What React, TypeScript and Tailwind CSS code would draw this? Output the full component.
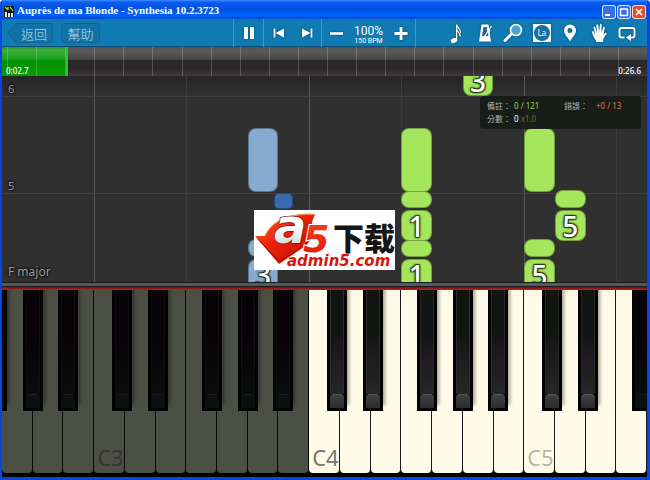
import React from "react";

const WHITE_KEYS = 21;
const FIRST_LIT_KEY = 10;
const KEY_LABELS: Record<number, string> = { 3: "C3", 10: "C4", 17: "C5" };
const KEY_NAMES = ["G", "A", "B", "C", "D", "E", "F"];

// Centres of the black keys, counted in white keys from the C of each octave.
const BLACK_OFFSETS: [string, number][] = [
  ["C#", 0.92],
  ["D#", 2.09],
  ["F#", 3.83],
  ["G#", 5.01],
  ["A#", 6.16],
];

const blackKeys = [-4, 3, 10, 17]
  .flatMap((base, octave) =>
    BLACK_OFFSETS.map(([name, offset]) => ({ name: `${name}${octave + 2}`, centre: base + offset })),
  )
  .filter((k) => k.centre > -0.5 && k.centre < 21);

type Note = { key: number; bottom: number; height: number; tone: "green" | "blue" | "navy"; finger?: string };

const notes: Note[] = [
  { key: 8, bottom: 90, height: 64, tone: "blue" },
  { key: 8.86, bottom: 73, height: 16, tone: "navy" },
  { key: 8, bottom: 25, height: 18, tone: "blue" },
  { key: 8, bottom: -8, height: 31, tone: "blue", finger: "3" },
  { key: 13, bottom: 90, height: 64, tone: "green" },
  { key: 13, bottom: 74, height: 17, tone: "green" },
  { key: 13, bottom: 41, height: 31, tone: "green", finger: "1" },
  { key: 13, bottom: 25, height: 17, tone: "green" },
  { key: 13, bottom: -8, height: 31, tone: "green", finger: "1" },
  { key: 15, bottom: 186, height: 31, tone: "green", finger: "3" },
  { key: 17, bottom: 90, height: 64, tone: "green" },
  { key: 17, bottom: 25, height: 18, tone: "green" },
  { key: 17, bottom: -8, height: 31, tone: "green", finger: "5" },
  { key: 18, bottom: 74, height: 18, tone: "green" },
  { key: 18, bottom: 41, height: 31, tone: "green", finger: "5" },
];

const toneClass = {
  green: "bg-[#a5e65c] rounded-lg",
  blue: "bg-[#86aad0] rounded-lg",
  navy: "bg-[#3a6ab0] rounded-[5px]",
};

const pct = (keys: number) => `${(keys / WHITE_KEYS) * 100}%`;

function TitleBar() {
  const box = "flex size-[14px] items-center justify-center rounded-[3px] border border-white/80";
  return (
    <header className="flex h-[19px] items-center bg-[linear-gradient(#3c8cff_0%,#0a5cf0_12%,#0050e0_45%,#0062ff_80%,#0048cc_100%)] pt-1 pr-px pl-[2px]">
      <svg viewBox="0 0 10 11" className="h-[11px] w-[10px]" aria-hidden="true">
        <rect width="10" height="11" fill="#10160e" />
        <path d="M1 6h2v5H1zM4 7h2v4H4zM7 7h2v4H7z" fill="#e8e8e0" />
        <path d="M1 1l3 3M4 1v3" stroke="#8fd84a" strokeWidth="1.4" />
        <path d="M6 1l3 4" stroke="#d4d84a" strokeWidth="1.2" />
      </svg>
      <h1 className="ml-[3px] flex-1 pb-[3px] font-['Liberation_Serif',serif] text-[11px] leading-3 font-bold whitespace-pre text-white">
        Auprès de ma Blonde - Synthesia 10.2.3723
      </h1>
      <div className="flex gap-px">
        <button aria-label="Minimize" className={`${box} bg-[#3a6fe8]`}>
          <svg viewBox="0 0 12 12" className="size-3"><path d="M2 8h5v2H2z" fill="#fff" /></svg>
        </button>
        <button aria-label="Maximize" className={`${box} bg-[#3a6fe8]`}>
          <svg viewBox="0 0 12 12" className="size-3"><path d="M2 3h8M2.5 3v6.5h7V3" fill="none" stroke="#fff" strokeWidth="1.4" /></svg>
        </button>
        <button aria-label="Close" className={`${box} bg-[#e0502c]`}>
          <svg viewBox="0 0 12 12" className="size-3"><path d="M3 3l6 6M9 3l-6 6" stroke="#fff" strokeWidth="1.7" /></svg>
        </button>
      </div>
    </header>
  );
}

function ToolIcon({ label, children }: { label: string; children: React.ReactNode }) {
  return (
    <button aria-label={label} className="flex h-7 w-7 items-center justify-center">
      <svg viewBox="0 0 28 28" className="size-7 drop-shadow-[0_0_1px_#06486e]" fill="none">{children}</svg>
    </button>
  );
}

function Toolbar() {
  const cjk = "font-['Noto_Sans_CJK_TC',sans-serif] text-[13px] leading-[19px] font-light text-[#b4dcee]";
  const line = "border-l border-[#3f9bcb]";
  return (
    <nav className="grid h-7 grid-cols-[1fr_auto_1fr] items-center border-b border-[#0a5078] bg-[#107ab2]">
      <div className="flex gap-2 pl-[5px]">
        <button className={`relative flex h-5 w-[46px] items-center justify-end pr-[6px] ${cjk}`}>
          <svg viewBox="0 0 46 20" className="absolute inset-0 h-5 w-[46px]" aria-hidden="true">
            <path d="M1 10L8 2Q9 .5 11 .5H42Q45.500 .5 45.500 4V16Q45.500 19.500 42 19.500H11Q9 19.500 8 18Z" fill="#1272a5" stroke="#0d6594" />
          </svg>
          <span className="relative">返回</span>
        </button>
        <button className={`flex h-5 w-[39px] items-center justify-center rounded border border-[#0d6594] bg-[#1272a5] ${cjk}`}>幫助</button>
      </div>
      <div className="flex h-full items-stretch border-r border-[#3f9bcb] text-white">
        <div className={`w-[30px] ${line}`}>
          <ToolIcon label="Pause"><path d="M10 8h4v12h-4zM16 8h4v12h-4z" fill="#fff" /></ToolIcon>
        </div>
        <div className={`flex w-[58px] ${line}`}>
          <ToolIcon label="Previous"><path d="M10.500 9.500v9" stroke="#fff" strokeWidth="1.8" /><path d="M20 9.500v9L11.500 14z" fill="#fff" /></ToolIcon>
          <ToolIcon label="Next"><path d="M19.500 9.500v9" stroke="#fff" strokeWidth="1.8" /><path d="M10 9.500v9l8.500-4.500z" fill="#fff" /></ToolIcon>
        </div>
        <div className={`flex w-[94px] items-center justify-between ${line}`}>
          <ToolIcon label="Slower"><path d="M8 14.500h13" stroke="#fff" strokeWidth="2.600" /></ToolIcon>
          <div className="pt-[3px] text-center font-['Roboto',sans-serif] whitespace-nowrap">
            <div className="text-[12px] leading-3">100%</div>
            <div className="text-[7px] leading-2">150 BPM</div>
          </div>
          <ToolIcon label="Faster"><path d="M7.500 14.500h13M14 8v13" stroke="#fff" strokeWidth="2.800" /></ToolIcon>
        </div>
      </div>
      <div className="mr-[6px] flex w-[199px] justify-between justify-self-end">
        <ToolIcon label="Notation">
          <ellipse cx="12" cy="21.500" rx="3.300" ry="2.400" fill="#fff" transform="rotate(-20 12 21.500)" />
          <path d="M14.600 21.500V5.500c.3 3 4.200 4 4 8.500M14.600 10.500c.8 2.500 4 3 3.600 7" stroke="#fff" strokeWidth="1.200" />
        </ToolIcon>
        <ToolIcon label="Metronome">
          <path d="M10.500 5.500h7L20 22.500H8z" fill="#fff" />
          <path d="M12.500 8h3.500l1.500 9h-6.500z" fill="#1b6d99" />
          <path d="M13.500 17.500L20.500 7" stroke="#fff" strokeWidth="1.300" />
          <path d="M16 10l3 2.200" stroke="#fff" strokeWidth="2" />
        </ToolIcon>
        <ToolIcon label="Zoom">
          <path d="M12.500 15L6 21.500" stroke="#fff" strokeWidth="3" strokeLinecap="round" />
          <circle cx="17" cy="11" r="5.500" fill="#4ba3d3" stroke="#fff" strokeWidth="1.700" />
        </ToolIcon>
        <ToolIcon label="Note labels">
          <rect x="5" y="5" width="18" height="18" rx="1" fill="#fff" />
          <circle cx="14" cy="14" r="8" fill="#17709f" />
          <text x="14" y="17" textAnchor="middle" fontSize="8" fontFamily="Noto Sans, sans-serif" fill="#fff">La</text>
        </ToolIcon>
        <ToolIcon label="Bookmark">
          <path fillRule="evenodd" d="M14 22.500C12.500 19 8 15.500 8 11.500a6 6 0 0 1 12 0c0 4-4.500 7.500-6 11zM14 9a2.500 2.500 0 1 0 0 5 2.500 2.500 0 0 0 0-5z" fill="#fff" />
        </ToolIcon>
        <ToolIcon label="Hands">
          <path d="M11.500 23c-.5-2-2.700-4-3.500-6.500l-1.200-3.600c-.2-1 1-1.300 1.600-.3l1.700 2.600L8.500 8.500c-.2-1.200 1.300-1.500 1.700-.3l1.800 5.300-.7-7.200c0-1.300 1.700-1.400 1.900 0l.9 6.700.7-7.200c.1-1.300 1.800-1.200 1.800 0l-.1 7.500 1.700-5c.4-1.200 1.900-.8 1.600.5l-1.300 6.700 1.400-1.500c.8-.8 2.200 0 1.600 1l-2.900 4.300-.8 3.700z" fill="#fff" />
        </ToolIcon>
        <ToolIcon label="Loop">
          <path d="M11.500 18.500H8.500a2 2 0 0 1-2-2V11a2 2 0 0 1 2-2h11a2 2 0 0 1 2 2v5.500a2 2 0 0 1-2 2H17" stroke="#fff" strokeWidth="1.900" />
          <path d="M18 15v7l-5-3.500z" fill="#fff" />
        </ToolIcon>
      </div>
    </nav>
  );
}

function Timeline() {
  return (
    <section className="relative h-[29px] bg-[linear-gradient(#505050_0%,#5a5a5a_10%,#454545_44%,#292629_46%,#2c282c_75%,#3c3a3c_100%)] font-['Noto_Sans',sans-serif] text-[8px] leading-[11px] font-medium text-white">
      <div className="absolute inset-y-0 left-0 w-[10.2%] border-r-2 border-[#2cc42c] bg-[linear-gradient(#2a962a_0%,#3cae3c_12%,#18a018_44%,#009000_48%,#0b9c0b_100%)]" />
      <div className="absolute inset-y-0 right-0 left-[5px] flex">
        {Array.from({ length: 22 }, (_, i) => (
          <span key={i} className="flex-1 border-l border-white/20" />
        ))}
      </div>
      <div className="relative flex h-full items-end justify-between pr-[6px] pl-1">
        <time>0:02.7</time>
        <time>0:26.6</time>
      </div>
    </section>
  );
}

function ScorePanel() {
  const cjk = "font-['Noto_Sans_CJK_TC',sans-serif] text-[#b0b0b0]";
  return (
    <dl className="absolute top-5 right-[6px] grid w-[161px] grid-cols-[27px_50px_32px_auto] gap-y-px rounded-[3px] bg-[#181c18]/95 px-[7px] py-1 font-['Noto_Sans',sans-serif] text-[8px] leading-3 whitespace-nowrap">
      <dt className={cjk}>備註：</dt>
      <dd className="text-[#8fd43f]">0 / 121</dd>
      <dt className={cjk}>錯誤：</dt>
      <dd className="text-[#dc7c48]">+0 / 13</dd>
      <dt className={cjk}>分數：</dt>
      <dd className="text-white">0 <span className="text-[#4f7a2c]">x1.0</span></dd>
    </dl>
  );
}

function Watermark() {
  return (
    <svg viewBox="0 0 141 60" className="absolute bottom-[12px] left-[39%] h-[60px] w-[141px] bg-white" role="img" aria-label="A5">
      <defs>
        <linearGradient id="red" x1="0" y1="0" x2="1" y2="1">
          <stop offset="0" stopColor="#ff6a20" />
          <stop offset=".45" stopColor="#ea220a" />
          <stop offset="1" stopColor="#b40c04" />
        </linearGradient>
        <linearGradient id="five" x1="0" y1="0" x2="0" y2="1">
          <stop offset="0" stopColor="#f2441a" />
          <stop offset="1" stopColor="#e01408" />
        </linearGradient>
        <linearGradient id="silver" x1="0" y1="0" x2="0" y2="1">
          <stop offset=".5" stopColor="#ffffff" />
          <stop offset="1" stopColor="#c4c4c4" />
        </linearGradient>
      </defs>
      <path d="M1 26L11 26C17 11 36 2 61 4L58 12C61 26 56 33 47 39L25 54Z" fill="url(#red)" />
      <path d="M11 26C17 11 36 3 60 4.500" fill="none" stroke="#ff9a50" />
      <path d="M3 28L25 52L47 38" fill="none" stroke="#9c0a04" />
      <text x="49" y="42" fontFamily="DejaVu Sans, sans-serif" fontWeight="700" fontStyle="italic" fontSize="38" fill="url(#five)" stroke="#fff" strokeWidth="2" paintOrder="stroke">5</text>
      <text x="20" y="33" fontFamily="DejaVu Sans, sans-serif" fontWeight="700" fontStyle="italic" fontSize="48" fill="url(#silver)" stroke="#801008" strokeWidth="1.500" paintOrder="stroke">a</text>
      <text x="79" y="40" fontFamily="Noto Sans CJK SC, sans-serif" fontWeight="900" fontSize="31" fill="#151515">下载</text>
      <text x="33" y="56" fontFamily="DejaVu Sans, sans-serif" fontWeight="700" fontStyle="italic" fontSize="15" fill="#d8140c">admin5.com</text>
    </svg>
  );
}

function NoteRoll() {
  const halo = "absolute left-[6px] font-['Noto_Sans',sans-serif] text-[#9a9a9a] [text-shadow:0_0_2px_#111,0_0_2px_#111,0_0_3px_#111]";
  return (
    <main className="relative min-h-[206px] flex-1 overflow-hidden bg-[linear-gradient(#262626_0px,#303030_20px)]">
      {[3, 10, 17].map((k) => (
        <i key={k} className="absolute inset-y-0 w-px bg-[#585858]" style={{ left: pct(k) }} />
      ))}
      {[6, 13, 20].map((k) => (
        <i key={k} className="absolute inset-y-0 w-px bg-[#3b3b3b]" style={{ left: pct(k) }} />
      ))}
      <i className="absolute inset-x-0 bottom-[185px] h-px bg-[#404040]" />
      <i className="absolute inset-x-0 bottom-[88px] h-px bg-[#404040]" />
      <span className={`${halo} bottom-[187px] text-[11px] leading-3`}>6</span>
      <span className={`${halo} bottom-[90px] text-[11px] leading-3`}>5</span>
      <span className={`${halo} bottom-[2px] text-[12px] leading-4`}>F major</span>
      {notes.map((n, i) => (
        <div
          key={i}
          className={`absolute flex items-center justify-center border border-black/30 ${toneClass[n.tone]}`}
          style={{ left: pct(n.key), bottom: n.bottom, height: n.height, width: pct(n.tone === "navy" ? 0.6 : 1) }}
        >
          {n.finger && (
            <span className="font-['Noto_Sans',sans-serif] text-[28px] leading-7 font-medium text-white [text-shadow:1px_1px_1px_#2c3c20,-1px_-1px_1px_#2c3c20,1px_-1px_1px_#2c3c20,-1px_1px_1px_#2c3c20,0_0_3px_#2c3c20]">
              {n.finger}
            </span>
          )}
        </div>
      ))}
      <ScorePanel />
      <Watermark />
    </main>
  );
}

function Keyboard() {
  return (
    <section className="bg-black pb-1">
      <div className="h-[5px] border-y border-[#1c1c1c] bg-[#58585a]" />
      <div className="h-[3px] bg-[linear-gradient(#6a1414,#c02020)]" />
      <div className="relative flex h-[183px] overflow-hidden">
        {Array.from({ length: WHITE_KEYS }, (_, i) => (
          <button
            key={i}
            aria-label={KEY_LABELS[i] ?? KEY_NAMES[i % 7]}
            className={`flex flex-1 items-end rounded-b-[4px] border-r border-black/90 pb-1 pl-[3px] font-['Noto_Sans',sans-serif] text-[22px] leading-6 ${
              i < FIRST_LIT_KEY ? "bg-[#4c4f43] text-[#34362f]" : i === FIRST_LIT_KEY ? "bg-[#fffbe8] text-[#777770]" : "bg-[#fffbe8] text-[#b9b7aa]"
            }`}
          >
            {KEY_LABELS[i]}
          </button>
        ))}
        {blackKeys.map(({ name, centre }) => {
          const dim = centre < FIRST_LIT_KEY || centre > 20;
          return (
            <button
              key={name}
              aria-label={name}
              className="absolute top-0 flex h-[121px] w-[3.1%] -translate-x-1/2 flex-col bg-black px-[3px] pb-[3px] shadow-[3px_-6px_3px_rgba(0,0,0,0.3)]"
              style={{ left: pct(centre) }}
            >
              <span className={`w-full flex-1 border-x ${dim ? "border-[#101010] bg-[linear-gradient(#070207_45%,#0a0d0b)]" : "border-[#2c2c2c] bg-[linear-gradient(#101510_40%,#1b181b_55%,#262626)]"}`} />
              <span className={`h-[14px] w-full rounded-t-[4px] border-t ${dim ? "border-[#1e1e22] bg-[#0c100e]" : "border-[#555] bg-[linear-gradient(#404040,#2c2c2c)]"}`} />
            </button>
          );
        })}
      </div>
    </section>
  );
}

export default function App() {
  return (
    <div className="flex min-h-screen flex-col rounded-t-[4px] bg-[#0846e0] pr-[3px] pb-[3px] pl-[2px]">
      <TitleBar />
      <Toolbar />
      <Timeline />
      <NoteRoll />
      <Keyboard />
    </div>
  );
}
